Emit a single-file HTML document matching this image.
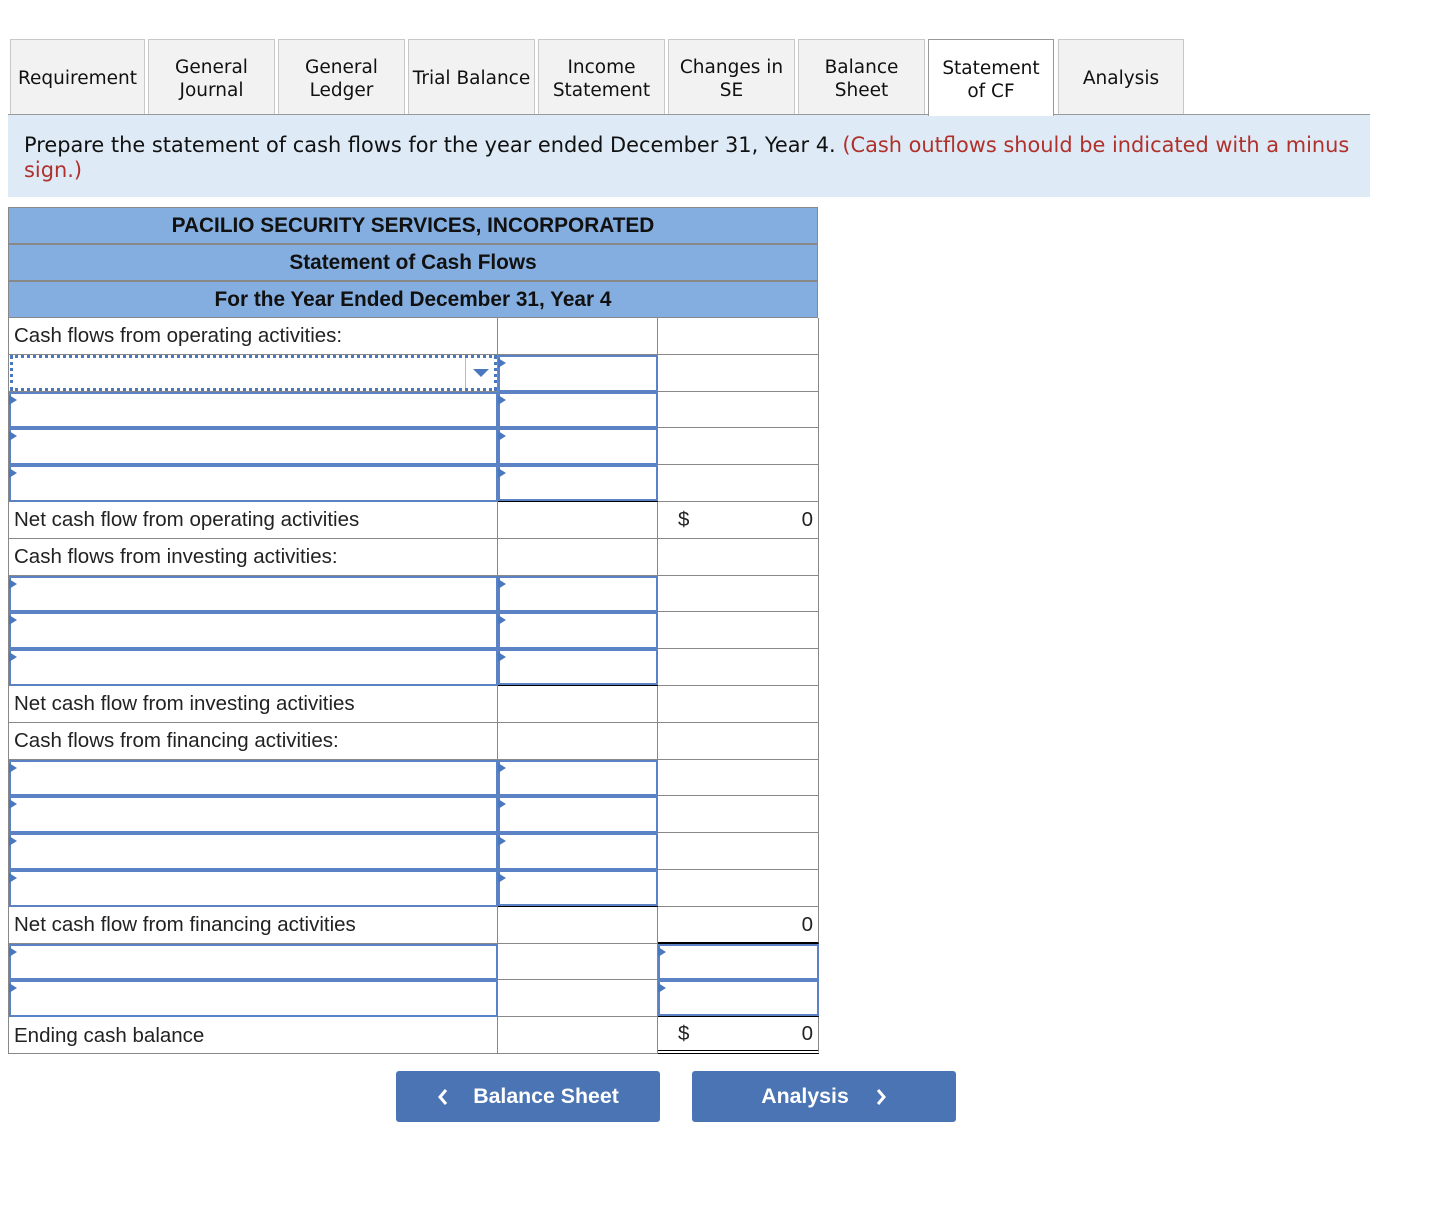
<!DOCTYPE html>
<html><head><meta charset="utf-8"><style>
body{margin:0;background:#fff;width:1436px;height:1220px;position:relative;font-family:"Liberation Sans",sans-serif;overflow:hidden}
.tab{position:absolute;top:39px;height:75px;width:125px;background:#f2f2f2;border:1px solid #c8c8c8;border-bottom:none;box-sizing:border-box;display:flex;align-items:center;justify-content:center;text-align:center;font-family:"DejaVu Sans",sans-serif;font-size:18.5px;line-height:23px;color:#111;padding-top:3px;white-space:nowrap}
.tab.act{background:#fff;border-color:#999;height:77px;z-index:2}
.bar{position:absolute;left:8px;top:114px;width:1362px;height:83px;background:#deebf7;border-top:1px solid #999;box-sizing:border-box;font-family:"DejaVu Sans",sans-serif;font-size:20.9px;line-height:25px;padding:18px 10px 0 16px;color:#111}
.bar span{color:#b0302a}
.hd{position:absolute;left:8px;width:810px;height:37px;background:#85aee0;border:1px solid #888;box-sizing:border-box;font-weight:bold;font-size:20.8px;display:flex;align-items:center;justify-content:center;color:#111;padding-top:0px}
.grid{position:absolute;left:8px;top:318px;width:810px;display:grid;grid-template-columns:489px 160px 161px;grid-template-rows:repeat(20,36.8px);border-left:1px solid #888;box-sizing:border-box}
.grid div{border-right:1px solid #888;border-bottom:1px solid #888;position:relative;font-size:20.5px;color:#222;box-sizing:border-box;display:flex;align-items:center;padding-left:5px;padding-top:1px}
.in::after{content:"";position:absolute;left:0;top:0;right:-1px;bottom:-1px;border:2px solid #5a82c4;box-sizing:border-box}
.in::before{content:"";position:absolute;left:0;top:3px;border-left:8px solid #4a78c0;border-top:5px solid transparent;border-bottom:5px solid transparent;z-index:1}
.dd::after{content:"";position:absolute;left:1px;top:0;right:0;bottom:0;border:3px dotted #4a78c0;box-sizing:border-box}
.dd span{position:absolute;right:1px;top:3px;bottom:3px;width:30px;border-left:1px solid #bbb;display:flex;align-items:center;justify-content:center}
.dd span::after{content:"";border-top:8px solid #4a78c0;border-left:8px solid transparent;border-right:8px solid transparent}
.num{justify-content:space-between;padding:1px 5px 0 20px!important}
.btn{position:absolute;top:1071px;height:51px;width:264px;background:#4a74b3;border-radius:3px;color:#fff;font-weight:bold;font-size:21.3px;display:flex;align-items:center;justify-content:center}
</style></head><body>
<div class="tab" style="left:10px;width:135px">Requirement</div>
<div class="tab" style="left:148px;width:127px">General<br>Journal</div>
<div class="tab" style="left:278px;width:127px">General<br>Ledger</div>
<div class="tab" style="left:408px;width:127px">Trial Balance</div>
<div class="tab" style="left:538px;width:127px">Income<br>Statement</div>
<div class="tab" style="left:668px;width:127px">Changes in<br>SE</div>
<div class="tab" style="left:798px;width:127px">Balance<br>Sheet</div>
<div class="tab act" style="left:928px;width:126px">Statement<br>of CF</div>
<div class="tab" style="left:1058px;width:126px">Analysis</div>
<div class="bar">Prepare the statement of cash flows for the year ended December 31, Year 4. <span>(Cash outflows should be indicated with a minus sign.)</span></div>
<div class="hd" style="top:207px">PACILIO SECURITY SERVICES, INCORPORATED</div>
<div class="hd" style="top:244px">Statement of Cash Flows</div>
<div class="hd" style="top:281px">For the Year Ended December 31, Year 4</div>
<div class="grid">
<div>Cash flows from operating activities:</div><div></div><div></div>
<div class="dd"><span></span></div><div class="in"></div><div></div>
<div class="in"></div><div class="in"></div><div></div>
<div class="in"></div><div class="in"></div><div></div>
<div class="in"></div><div class="in" style="border-bottom:2px solid #000"></div><div></div>
<div>Net cash flow from operating activities</div><div></div><div class="num"><span>$</span><span>0</span></div>
<div>Cash flows from investing activities:</div><div></div><div></div>
<div class="in"></div><div class="in"></div><div></div>
<div class="in"></div><div class="in"></div><div></div>
<div class="in"></div><div class="in" style="border-bottom:2px solid #000"></div><div></div>
<div>Net cash flow from investing activities</div><div></div><div></div>
<div>Cash flows from financing activities:</div><div></div><div></div>
<div class="in"></div><div class="in"></div><div></div>
<div class="in"></div><div class="in"></div><div></div>
<div class="in"></div><div class="in"></div><div></div>
<div class="in"></div><div class="in" style="border-bottom:2px solid #000"></div><div></div>
<div>Net cash flow from financing activities</div><div></div><div class="num" style="justify-content:flex-end;border-bottom:2px solid #000"><span>0</span></div>
<div class="in"></div><div></div><div class="in"></div>
<div class="in"></div><div></div><div class="in" style="border-bottom:2px solid #000"></div>
<div>Ending cash balance</div><div></div><div class="num" style="border-bottom:4px double #000"><span>$</span><span>0</span></div>
</div>
<div class="btn" style="left:396px"><svg width="12" height="18" viewBox="0 0 12 18" style="margin-right:24px"><path d="M9 2L3 9l6 7" fill="none" stroke="#fff" stroke-width="3"/></svg>Balance Sheet</div>
<div class="btn" style="left:692px">Analysis<svg width="12" height="18" viewBox="0 0 12 18" style="margin-left:26px"><path d="M3 2l6 7-6 7" fill="none" stroke="#fff" stroke-width="3"/></svg></div>
</body></html>
